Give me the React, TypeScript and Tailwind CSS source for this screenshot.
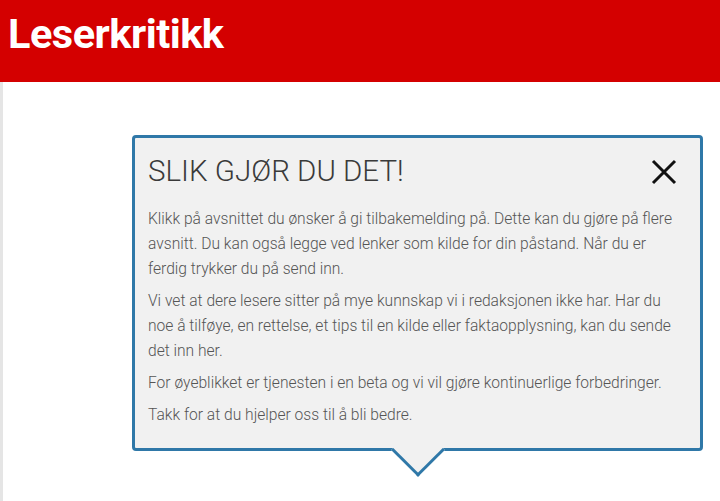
import React from 'react';

// each paragraph split into the lines the reference shows
const paragraphs: string[][] = [
  [
    'Klikk på avsnittet du ønsker å gi tilbakemelding på. Dette kan du gjøre på flere',
    'avsnitt. Du kan også legge ved lenker som kilde for din påstand. Når du er',
    'ferdig trykker du på send inn.',
  ],
  [
    'Vi vet at dere lesere sitter på mye kunnskap vi i redaksjonen ikke har. Har du',
    'noe å tilføye, en rettelse, et tips til en kilde eller faktaopplysning, kan du sende',
    'det inn her.',
  ],
  ['For øyeblikket er tjenesten i en beta og vi vil gjøre kontinuerlige forbedringer.'],
  ['Takk for at du hjelper oss til å bli bedre.'],
];

const App: React.FC = () => {
  return (
    <div className="min-h-[501px] bg-white font-['Roboto',sans-serif]">
      <header className="h-[82px] bg-[#d40000] pl-[8px] pt-[8px]">
        <h1 className="text-[41.5px] font-bold leading-[52px] tracking-[-0.5px] text-white">Leserkritikk</h1>
      </header>

      <div className="min-h-[419px] border-l-[3px] border-[#e5e5e5] pt-[53px] pl-[129px]">
        <div className="relative w-[571px] rounded-[4px] border-[3px] border-[#2f78a8] bg-[#f1f1f1] pl-[13px] pr-[14px] pt-[11px] pb-[20px]">
          <div className="flex items-center justify-between">
            <h2 className="text-[29.5px] font-light leading-[44px] text-[#3a3a3a]">SLIK GJØR DU DET!</h2>
            <button className="mr-[9px] mt-[2px]">
              <svg width="26" height="26" viewBox="0 0 26 26" fill="none" stroke="#111" strokeWidth="3">
                <path d="M2 2 L24 24 M24 2 L2 24" />
              </svg>
            </button>
          </div>

          <div className="relative z-10 mt-[14px] flex flex-col gap-[7px] text-[15.6px] font-light leading-[25px] text-[#555]">
            {paragraphs.map((lines) => (
              <p key={lines[0]}>
                {lines.map((line) => (
                  <span key={line} className="block whitespace-nowrap">
                    {line}
                  </span>
                ))}
              </p>
            ))}
          </div>

          <div className="absolute left-1/2 bottom-[-21px] h-[38px] w-[38px] -translate-x-1/2 rotate-45 border-b-[3px] border-r-[3px] border-[#2f78a8] bg-[#f1f1f1]" />
        </div>
      </div>
    </div>
  );
};

export default App;
